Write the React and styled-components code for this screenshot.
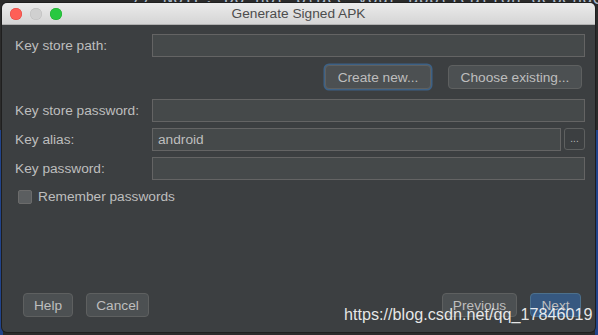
import styled, { createGlobalStyle } from "styled-components";

const GlobalStyle = createGlobalStyle`
  html, body {
    margin: 0;
    padding: 0;
    background: #2b2b2b;
  }
  body {
    font-family: "Liberation Sans", Arial, sans-serif;
  }
`;

const Desktop = styled.div`
  position: relative;
  width: 598px;
  height: 335px;
  overflow: hidden;
  background:
    linear-gradient(#2b2b2b, #2b2b2b) 0 0 / 598px 130px no-repeat,
    linear-gradient(90deg, #21438a 0 3px, #2b2b2b 3px 595px, #21438a 595px) 0 130px / 598px 205px no-repeat;
`;

const CodeLine = styled.div`
  position: absolute;
  left: 132px;
  top: -12px;
  font-family: "DejaVu Sans Mono", monospace;
  font-size: 17px;
  color: #a9b7c6;
  white-space: nowrap;
`;

const Dialog = styled.div`
  position: absolute;
  left: 2px;
  top: 3px;
  width: 593px;
  height: 329px;
  display: flex;
  flex-direction: column;
  background: #3c3f41;
  border-radius: 5px;
  overflow: hidden;
  box-shadow: 0 0 0 1px #1f1f1f;
`;

const TitleBar = styled.div`
  position: relative;
  height: 21px;
  flex: none;
  display: flex;
  align-items: center;
  justify-content: center;
  background: linear-gradient(#ebebeb, #d5d5d5);
  border-bottom: 1px solid #b0b0b0;
  color: #4d4d4d;
  font-size: 13.7px;
`;

const Lights = styled.div`
  position: absolute;
  left: 8px;
  top: 5px;
  display: flex;
  gap: 8px;
`;

const Light = styled.span`
  width: 12px;
  height: 12px;
  border-radius: 50%;
  background: ${(p) => p.$color};
  box-shadow: inset 0 0 0 0.5px ${(p) => p.$edge};
`;

const Body = styled.div`
  flex: 1;
  display: flex;
  flex-direction: column;
  padding: 9px 10px 15px 13px;
`;

const Row = styled.div`
  display: grid;
  grid-template-columns: 137px 1fr;
  align-items: center;
  margin-bottom: ${(p) => p.$gap || 0}px;
`;

const Label = styled.label`
  color: #bebebe;
  font-size: 13.7px;
  white-space: nowrap;
`;

const Input = styled.div`
  height: 21px;
  border: 1px solid #646464;
  background: #45494a;
  color: #bebebe;
  font-size: 13.7px;
  display: flex;
  align-items: center;
  padding-left: 5px;
`;

const InputWithButton = styled.div`
  display: flex;
  gap: 3px;
  ${Input} {
    flex: 1;
  }
`;

const DotsButton = styled.div`
  width: 19px;
  height: 20px;
  border: 1px solid #5e6060;
  border-radius: 3px;
  background: #3c3f41;
  color: #bbbbbb;
  font-size: 10px;
  display: flex;
  align-items: center;
  justify-content: center;
  line-height: 1;
`;

const ButtonRow = styled.div`
  display: flex;
  justify-content: flex-end;
  gap: 17px;
  padding-right: 3px;
  margin-bottom: 10px;
`;

const Button = styled.div`
  box-sizing: border-box;
  width: ${(p) => p.$w}px;
  height: 24px;
  display: flex;
  align-items: center;
  justify-content: center;
  border: 1px solid ${(p) => (p.$primary ? "#4c708c" : "#5e6060")};
  border-radius: 4px;
  background: ${(p) => (p.$primary ? "#365880" : "#4c5052")};
  color: #bebebe;
  font-size: 13.7px;
  box-shadow: ${(p) => (p.$focus ? "0 0 0 1.5px #3d6185" : "none")};
  white-space: nowrap;
`;

const CheckRow = styled.div`
  display: flex;
  align-items: center;
  gap: 6px;
  margin-left: 3px;
  margin-top: 9px;
`;

const Box = styled.span`
  width: 12px;
  height: 12px;
  border-radius: 2px;
  background: #5b5e60;
  border: 1px solid #6b6b6b;
`;

const Footer = styled.div`
  margin-top: auto;
  display: flex;
  justify-content: space-between;
  padding: 0 4px 0 8px;
`;

const Group = styled.div`
  display: flex;
  gap: 13px;
`;

const Watermark = styled.div`
  position: absolute;
  left: 344px;
  top: 305px;
  font-family: "Liberation Sans", Arial, sans-serif;
  font-size: 16.2px;
  color: rgba(255, 255, 255, 0.88);
  white-space: nowrap;
`;

export default function App() {
  return (
    <>
      <GlobalStyle />
      <Desktop>
        <CodeLine>// NOTE: Do not place your application dependencies here</CodeLine>
        <Dialog>
          <TitleBar>
            <Lights>
              <Light $color="#fe5f57" $edge="#e0443e" />
              <Light $color="#d0d0d0" $edge="#bdbdbd" />
              <Light $color="#28c840" $edge="#1aab29" />
            </Lights>
            Generate Signed APK
          </TitleBar>
          <Body>
            <Row $gap={8}>
              <Label>Key store path:</Label>
              <Input />
            </Row>
            <ButtonRow>
              <Button $focus $w={106}>Create new...</Button>
              <Button $w={134}>Choose existing...</Button>
            </ButtonRow>
            <Row $gap={6}>
              <Label>Key store password:</Label>
              <Input />
            </Row>
            <Row $gap={6}>
              <Label>Key alias:</Label>
              <InputWithButton>
                <Input>android</Input>
                <DotsButton>...</DotsButton>
              </InputWithButton>
            </Row>
            <Row>
              <Label>Key password:</Label>
              <Input />
            </Row>
            <CheckRow>
              <Box />
              <Label>Remember passwords</Label>
            </CheckRow>
            <Footer>
              <Group>
                <Button $w={50}>Help</Button>
                <Button $w={63}>Cancel</Button>
              </Group>
              <Group>
                <Button $w={75}>Previous</Button>
                <Button $primary $w={51}>Next</Button>
              </Group>
            </Footer>
          </Body>
        </Dialog>
        <Watermark>https://blog.csdn.net/qq_17846019</Watermark>
      </Desktop>
    </>
  );
}
